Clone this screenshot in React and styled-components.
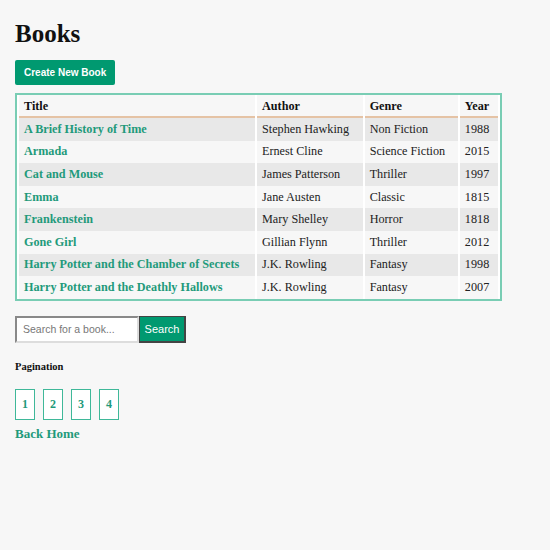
import React from "react";
import styled, { createGlobalStyle } from "styled-components";

const Global = createGlobalStyle`
  html, body { margin: 0; padding: 0; background: #f7f7f7; }
  body { font-family: "Liberation Serif", "Times New Roman", serif; color: #111; }
`;

const Page = styled.div`
  padding: 19px 15px;
  display: flex;
  flex-direction: column;
  align-items: flex-start;
`;

const Title = styled.h1`
  font-size: 25px;
  font-weight: bold;
  margin: 0 0 11px 0;
  line-height: 30px;
`;

const GreenButton = styled.button`
  background: #009970;
  color: #fff;
  border: none;
  border-radius: 2px;
  font-family: "Liberation Sans", Arial, sans-serif;
  font-weight: bold;
  font-size: 10px;
  height: 25px;
  padding: 0 9px;
  margin-bottom: 8px;
`;

const Table = styled.table`
  border: 2px solid #79cdb4;
  border-collapse: separate;
  border-spacing: 2px 0;
  background: #fff;
  width: 487px;
  font-size: 12.2px;
`;

const Th = styled.th`
  text-align: left;
  font-weight: bold;
  padding: 2px 6px 0 5px;
  height: 19px;
  background: #f7f7f7;
  border-bottom: 2px solid #e5c3a5;
`;

const Tr = styled.tr`
  background: ${(p) => (p.$shade ? "#e8e8e8" : "#f7f7f7")};
`;

const Td = styled.td`
  padding: 0 6px 0 5px;
  height: 22.6px;
  color: ${(p) => (p.$link ? "#1f9a7b" : "#222")};
  font-weight: ${(p) => (p.$link ? "bold" : "normal")};
  white-space: nowrap;
`;

const SearchRow = styled.form`
  display: flex;
  margin-top: 15px;
`;

const SearchInput = styled.input`
  border: 2px inset #ddd;
  background: #fff;
  padding: 0 6px;
  font-family: "Liberation Sans", Arial, sans-serif;
  font-size: 10.5px;
  box-sizing: border-box;
  width: 124px;
  height: 27px;
  &::placeholder { color: #777; }
`;

const SearchButton = styled.button`
  background: #009970;
  color: #fff;
  border-width: 1px 2px 2px 1px;
  border-style: solid;
  border-color: #444;
  font-family: "Liberation Sans", Arial, sans-serif;
  font-size: 11px;
  height: 27px;
  width: 47px;
  padding: 0;
`;

const Label = styled.h4`
  font-size: 10.5px;
  font-weight: bold;
  margin: 18px 0 0 0;
`;

const Pager = styled.div`
  display: flex;
  gap: 8px;
  margin-top: 17px;
`;

const PageBtn = styled.button`
  width: 20px;
  height: 31px;
  border: 1px solid #3fb899;
  background: #fff;
  color: #1f9a7b;
  font-family: "Liberation Serif", serif;
  font-weight: bold;
  font-size: 12px;
  padding: 0;
`;

const BackLink = styled.a`
  margin-top: 6px;
  color: #1f9a7b;
  font-weight: bold;
  font-size: 13px;
  text-decoration: none;
`;

const books = [
  ["A Brief History of Time", "Stephen Hawking", "Non Fiction", "1988"],
  ["Armada", "Ernest Cline", "Science Fiction", "2015"],
  ["Cat and Mouse", "James Patterson", "Thriller", "1997"],
  ["Emma", "Jane Austen", "Classic", "1815"],
  ["Frankenstein", "Mary Shelley", "Horror", "1818"],
  ["Gone Girl", "Gillian Flynn", "Thriller", "2012"],
  ["Harry Potter and the Chamber of Secrets", "J.K. Rowling", "Fantasy", "1998"],
  ["Harry Potter and the Deathly Hallows", "J.K. Rowling", "Fantasy", "2007"],
];

export default function App() {
  return (
    <>
      <Global />
      <Page>
        <Title>Books</Title>
        <GreenButton>Create New Book</GreenButton>
        <Table>
          <thead>
            <tr>
              <Th style={{ width: 225 }}>Title</Th>
              <Th>Author</Th>
              <Th>Genre</Th>
              <Th>Year</Th>
            </tr>
          </thead>
          <tbody>
            {books.map((b, i) => (
              <Tr key={b[0]} $shade={i % 2 === 0}>
                <Td $link>{b[0]}</Td>
                <Td>{b[1]}</Td>
                <Td>{b[2]}</Td>
                <Td>{b[3]}</Td>
              </Tr>
            ))}
          </tbody>
        </Table>
        <SearchRow onSubmit={(e) => e.preventDefault()}>
          <SearchInput placeholder="Search for a book..." />
          <SearchButton>Search</SearchButton>
        </SearchRow>
        <Label>Pagination</Label>
        <Pager>
          {[1, 2, 3, 4].map((n) => (
            <PageBtn key={n}>{n}</PageBtn>
          ))}
        </Pager>
        <BackLink href="#">Back Home</BackLink>
      </Page>
    </>
  );
}
